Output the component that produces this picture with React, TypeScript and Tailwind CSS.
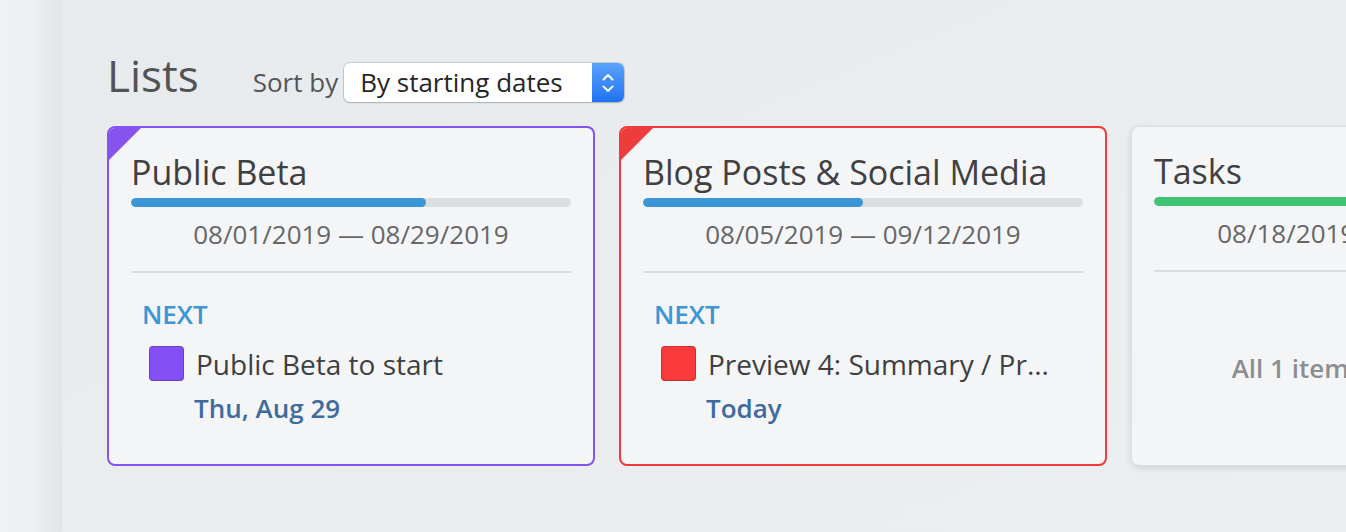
const font = { fontFamily: '"Open Sans", "Noto Sans", sans-serif' };

type Item = { name: string; color: string; due: string };

type ListCard = {
  title: string;
  accent: string | null;
  bar: string;
  progress: number;
  dates: string;
  item?: Item;
  summary?: string;
};

const lists: ListCard[] = [
  {
    title: 'Public Beta',
    accent: '#8653f0',
    bar: '#3a96d6',
    progress: 67,
    dates: '08/01/2019 — 08/29/2019',
    item: { name: 'Public Beta to start', color: '#8450f5', due: 'Thu, Aug 29' },
  },
  {
    title: 'Blog Posts & Social Media',
    accent: '#ee3b3b',
    bar: '#3a96d6',
    progress: 50,
    dates: '08/05/2019 — 09/12/2019',
    item: { name: 'Preview 4: Summary / Pr...', color: '#f93a3a', due: 'Today' },
  },
  {
    title: 'Tasks',
    accent: null,
    bar: '#40c577',
    progress: 100,
    dates: '08/18/2019 — 08/31/2019',
    summary: 'All 1 item(s) completed',
  },
];

function Card({ list }: { list: ListCard }) {
  const bordered = list.accent !== null;
  return (
    <div
      className={`relative shrink-0 w-[488px] h-[340px] rounded-[8px] bg-[#f4f5f7] overflow-hidden flex flex-col px-[22px] pt-[24px] ${
        bordered ? 'border-2' : 'border border-[#dcdfe2] shadow-[0_2px_6px_rgba(0,0,0,0.12)]'
      }`}
      style={bordered ? { borderColor: list.accent! } : undefined}
    >
      {bordered && (
        <div
          className="absolute left-0 top-0 w-[32px] h-[32px]"
          style={{ background: list.accent!, clipPath: 'polygon(0 0, 100% 0, 0 100%)' }}
        />
      )}
      <div className="text-[34px] leading-[40px] text-[#3f4042] whitespace-nowrap">{list.title}</div>
      <div className="mt-[6px] h-[9px] shrink-0 rounded-full bg-[#dcdee0] overflow-hidden">
        <div className="h-full rounded-full" style={{ width: `${list.progress}%`, background: list.bar }} />
      </div>
      <div className="mt-[9px] text-center text-[26px] leading-[36px] text-[#666769] whitespace-nowrap">
        {list.dates}
      </div>
      <div className="mt-[19px] h-[2px] shrink-0 bg-[#dcdddf]" />
      {list.item ? (
        <div className="pl-[11px] pt-[25px]">
          <div className="text-[26px] leading-[32px] text-[#3b96d8] font-semibold">NEXT</div>
          <div className="mt-[16px] flex items-center gap-[12px] pl-[7px]">
            <div
              className="w-[35px] h-[35px] shrink-0 rounded-[4px] border border-black/20"
              style={{ background: list.item.color }}
            />
            <div className="text-[28px] leading-[34px] text-[#3e3f41] whitespace-nowrap">{list.item.name}</div>
          </div>
          <div className="mt-[11px] pl-[52px] text-[26px] leading-[32px] font-semibold text-[#3f6b9e]">
            {list.item.due}
          </div>
        </div>
      ) : (
        <div className="flex-1 flex items-center justify-center">
          <div className="text-[26px] text-[#8d8e90] font-semibold whitespace-nowrap">{list.summary}</div>
        </div>
      )}
    </div>
  );
}

function SortSelect() {
  return (
    <div className="flex items-baseline h-[39px] w-[280px] rounded-[6px] bg-white shadow-[0_0_0_1px_rgba(0,0,0,0.12),0_1px_2px_rgba(0,0,0,0.15)] overflow-hidden">
      <div className="flex-1 pl-[16px] text-[26px] leading-[39px] text-[#262626] whitespace-nowrap">By starting dates</div>
      <div className="w-[32px] h-[39px] self-stretch bg-gradient-to-b from-[#5aa2fb] to-[#1f72f3] flex items-center justify-center">
        <svg width="14" height="26" viewBox="0 0 14 26" fill="none" stroke="white" strokeWidth="2" strokeLinecap="round" strokeLinejoin="round">
          <path d="M2.5 9.5 7 5l4.5 4.5" />
          <path d="M2.5 16.5 7 21l4.5-4.5" />
        </svg>
      </div>
    </div>
  );
}

export default function App() {
  return (
    <div className="w-[1346px] h-[532px] flex overflow-hidden bg-[#e9ecee]" style={font}>
      <div className="w-[62px] shrink-0 bg-gradient-to-r from-[#eff1f2] via-[#eef0f1] to-[#e2e5e7]" />
      <div className="flex-1 min-w-0 pl-[45px] pt-[49px] bg-gradient-to-br from-[#e8ebed] to-[#eceef0]">
        <div className="flex items-baseline h-[52px]">
          <div className="text-[44px] leading-[52px] text-[#525356]">Lists</div>
          <div className="ml-[54px] text-[26px] leading-[39px] text-[#545557]">Sort by</div>
          <div className="ml-[6px]">
            <SortSelect />
          </div>
        </div>
        <div className="mt-[25px] flex gap-[24px]">
          {lists.map((l) => (
            <Card key={l.title} list={l} />
          ))}
        </div>
      </div>
    </div>
  );
}
